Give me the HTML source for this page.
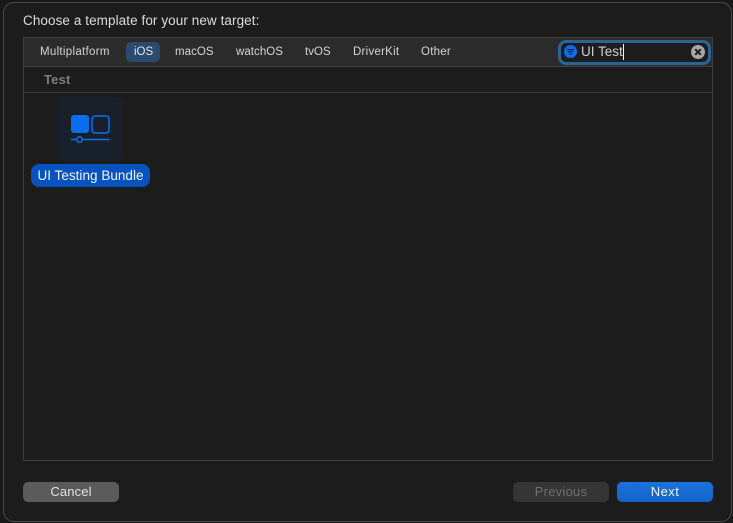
<!DOCTYPE html>
<html><head><meta charset="utf-8"><style>
html,body{margin:0;padding:0;width:733px;height:523px;overflow:hidden;background:#191919;font-family:"Liberation Sans",sans-serif}
.a{position:absolute;white-space:nowrap}
#win{position:absolute;left:3px;top:2px;width:729px;height:520px;box-sizing:border-box;background:#1c1c1d;border:1px solid #4a4a4b;border-radius:11px}
.tab{position:absolute;top:45px;font-size:11.5px;line-height:14px;color:#d6d6d6;letter-spacing:.2px}
.btn{position:absolute;top:482px;width:96px;height:20px;border-radius:5px;text-align:center;font-size:13px;line-height:20px;letter-spacing:.15px}
</style></head><body>
<div id="win"></div>
<div class="a" style="left:23px;top:13px;font-size:13.5px;line-height:16px;color:#dcdcdc;letter-spacing:.08px">Choose a template for your new target:</div>
<div class="a" style="left:23px;top:37px;width:690px;height:424px;box-sizing:border-box;border:1px solid #3e3e3f;background:#1c1c1d"></div>
<div class="a" style="left:24px;top:38px;width:688px;height:28px;background:#2b2b2c"></div>
<div class="a" style="left:24px;top:66px;width:688px;height:1px;background:#424243"></div>
<div class="a" style="left:24px;top:92px;width:688px;height:1px;background:#3c3c3d"></div>
<div class="a" style="left:126px;top:42px;width:34px;height:20px;border-radius:5px;background:#2a4a71"></div>
<div class="tab" style="left:40px;letter-spacing:.3px">Multiplatform</div>
<div class="tab" style="left:134px;color:#e6e6e6;letter-spacing:0">iOS</div>
<div class="tab" style="left:175px;letter-spacing:.05px">macOS</div>
<div class="tab" style="left:236px;letter-spacing:.05px">watchOS</div>
<div class="tab" style="left:305px;letter-spacing:.05px">tvOS</div>
<div class="tab" style="left:353px;letter-spacing:.25px">DriverKit</div>
<div class="tab" style="left:421px;letter-spacing:.25px">Other</div>
<div class="a" style="left:44px;top:72px;font-size:13px;line-height:15px;font-weight:bold;color:#7d7d7d;letter-spacing:.2px">Test</div>
<div class="a" style="left:558px;top:40px;width:153px;height:25px;box-sizing:border-box;border:3px solid #2a6595;border-radius:8px;background:#1d1d1e"></div>
<svg class="a" style="left:564px;top:45px" width="14" height="14" viewBox="0 0 14 14"><circle cx="6.5" cy="6.5" r="6.5" fill="#0a6fee"/><path d="M2.8 4.6h7.4M4.2 6.8h4.6M5.4 9h2.2" stroke="#10233f" stroke-width="1.3" fill="none"/></svg>
<div class="a" style="left:581px;top:44px;font-size:13.5px;line-height:16px;color:#cfcfcf">UI Test</div>
<div class="a" style="left:623px;top:44px;width:1px;height:16px;background:#f2f2f2"></div>
<svg class="a" style="left:691px;top:45px" width="14" height="14" viewBox="0 0 14 14"><circle cx="7" cy="7" r="7" fill="#a6a6a6"/><path d="M4.2 4.2l5.6 5.6M9.8 4.2l-5.6 5.6" stroke="#1d1d1e" stroke-width="2"/></svg>
<div class="a" style="left:58px;top:97px;width:64px;height:64px;border-radius:6px;background:#18202c"></div>
<svg class="a" style="left:70px;top:114px" width="42" height="30" viewBox="0 0 42 30">
<rect x="1" y="1" width="18" height="18" rx="3" fill="#0a6fee"/>
<rect x="22" y="2" width="17" height="17" rx="3" fill="none" stroke="#0a6fee" stroke-width="1.6"/>
<path d="M1 25.5h5.5M12.5 25.5H39.5" stroke="#0a6fee" stroke-width="1.5"/>
<circle cx="9.5" cy="25.5" r="2.7" fill="none" stroke="#0a6fee" stroke-width="1.5"/>
</svg>
<div class="a" style="left:31px;top:164px;width:119px;height:23px;border-radius:8px;background:#0653c0;text-align:center;font-size:13.5px;line-height:23px;font-weight:500;color:#f0f4fa;letter-spacing:.03px">UI Testing Bundle</div>
<div class="btn" style="left:23px;background:#5b5b5c;color:#e2e2e2">Cancel</div>
<div class="btn" style="left:513px;background:#353536;color:#6f6f6f;letter-spacing:.25px">Previous</div>
<div class="btn" style="left:617px;background:linear-gradient(#1a72de,#1562c6);color:#f2f6fc;letter-spacing:.45px">Next</div>
</body></html>
